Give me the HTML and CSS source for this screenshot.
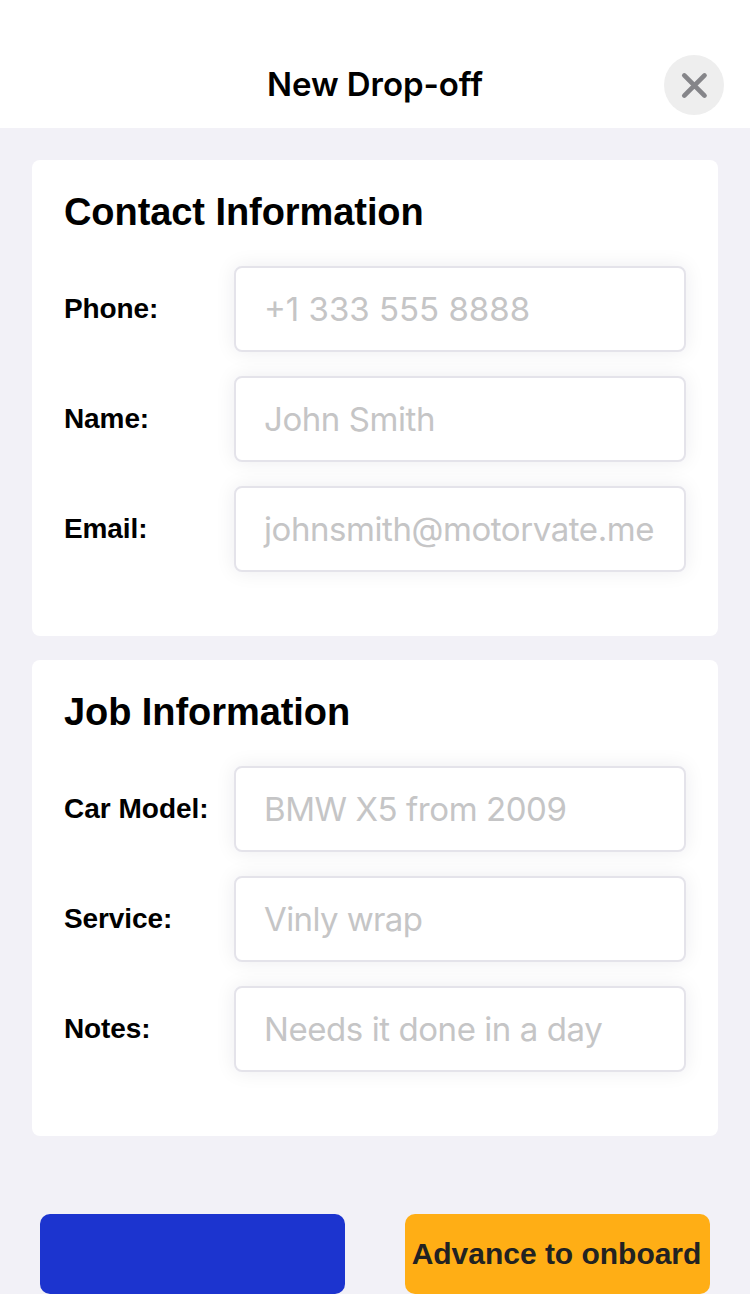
FILE: index.html
```html
<!DOCTYPE html>
<html lang="en">
<head>
<meta charset="utf-8">
<title>New Drop-off</title>
<link rel="stylesheet" href="styles.css">
</head>
<body>
<header class="header">
  <h1 class="title">New Drop-off</h1>
  <button class="close" aria-label="Close"><svg width="60" height="60" viewBox="0 0 60 60"><path d="M20.300 20.400L40.500 40.600M40.500 20.400L20.300 40.600" stroke="#858589" stroke-width="4.700" stroke-linecap="round"/></svg></button>
</header>
<main class="content">
  <section class="card">
    <h2 class="heading">Contact Information</h2>
    <div class="row"><span class="label">Phone:</span><div class="field field-phone">+1 333 555 8888</div></div>
    <div class="row"><span class="label">Name:</span><div class="field">John Smith</div></div>
    <div class="row"><span class="label">Email:</span><div class="field">johnsmith@motorvate.me</div></div>
  </section>
  <section class="card">
    <h2 class="heading">Job Information</h2>
    <div class="row"><span class="label label-car">Car Model:</span><div class="field">BMW X5 from 2009</div></div>
    <div class="row"><span class="label">Service:</span><div class="field field-service">Vinly wrap</div></div>
    <div class="row"><span class="label">Notes:</span><div class="field">Needs it done in a day</div></div>
  </section>
  <div class="actions">
    <button class="button primary"></button>
    <button class="button advance">Advance to onboard</button>
  </div>
</main>
</body>
</html>
```
FILE: styles.css
```css
* { box-sizing: border-box; }
body { margin: 0; height: 1294px; overflow: hidden; background: #f2f1f7; font-family: "Liberation Sans", Arial, sans-serif; color: #000; }
.header { height: 128px; padding: 55px 26px 0 86px; display: flex; background: #fff; }
.title { flex: 1; margin: 0; text-align: center; font: 600 33px/59px Inter, sans-serif; letter-spacing: -.08px; }
.close { width: 60px; height: 60px; padding: 0; border: 0; border-radius: 50%; background: #eee; }
.close svg { display: block; }
.content { padding: 32px 32px 0; }
.card { height: 476px; padding: 32px; border-radius: 8px; background: #fff; margin-bottom: 24px; }
.heading { margin: 0 0 34px; height: 40px; font: 700 38px/41px "Liberation Sans", Arial, sans-serif; letter-spacing: -.07px; white-space: nowrap; }
.row { height: 86px; margin-bottom: 24px; display: flex; align-items: center; }
.label { width: 170px; font: 700 28px/40px "Liberation Sans", Arial, sans-serif; letter-spacing: -.1px; white-space: nowrap; }
.label-car { letter-spacing: 0; }
.field { width: 452px; height: 86px; padding: 0 28px; border: 2px solid #e4e3ea; border-radius: 8px; background: #fff; box-shadow: 0 0 20px rgba(20, 20, 50, .08); color: #c5c5c6; font: 400 33px/82px Inter, sans-serif; letter-spacing: -.43px; white-space: nowrap; }
.field-phone { letter-spacing: 0; }
.field-service { letter-spacing: -.6px; }
.actions { padding: 54px 8px 0; display: flex; justify-content: space-between; }
.button { width: 305px; height: 80px; border: 0; border-radius: 10px; padding: 0; }
.primary { background: #1c34cf; }
.advance { padding-right: 2px; background: #ffae15; color: #222; font: 700 30px/80px "Liberation Sans", Arial, sans-serif; letter-spacing: -.02px; white-space: nowrap; }
```
